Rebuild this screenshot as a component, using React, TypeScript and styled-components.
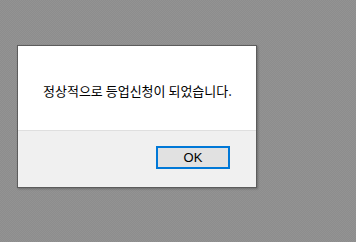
import styled, { createGlobalStyle } from "styled-components";

const GlobalStyle = createGlobalStyle`
  html, body {
    margin: 0;
    padding: 0;
  }
  body {
    font-family: "Noto Sans CJK KR", "Liberation Sans", sans-serif;
  }
`

const Backdrop = styled.div`
  width: 356px;
  height: 242px;
  box-sizing: border-box;
  padding: 45px 0 0 17px;
  background-color: #8f8f8f;
  background-image: repeating-conic-gradient(#8d8d8d 0 25%, #939393 0 50%);
  background-size: 2px 2px;
`

const Dialog = styled.div`
  width: 240px;
  height: 143px;
  box-sizing: border-box;
  border: 1px solid #5c5c5c;
  background: #f0f0f0;
  display: flex;
  flex-direction: column;
  box-shadow: 1px 1px 2px rgba(0, 0, 0, 0.25);
`

const Body = styled.div`
  height: 85px;
  background: #ffffff;
  border-bottom: 1px solid #dfdfdf;
  display: flex;
  align-items: center;
  padding-left: 25px;
  padding-top: 4px;
  box-sizing: border-box;
`

const Message = styled.p`
  margin: 0;
  font-size: 13px;
  color: #000;
  white-space: nowrap;
`

const Footer = styled.div`
  flex: 1;
  display: flex;
  justify-content: flex-end;
  align-items: flex-start;
  padding: 15px 26px 0 0;
`

const OkButton = styled.button`
  width: 74px;
  height: 23px;
  box-sizing: border-box;
  border: 2px solid #0078d7;
  background: #e1e1e1;
  font-family: "Liberation Sans", Arial, sans-serif;
  font-size: 13px;
  color: #000;
  padding: 0;
`

export default function App() {
  return (
    <>
      <GlobalStyle />
      <Backdrop>
        <Dialog>
          <Body>
            <Message>정상적으로 등업신청이 되었습니다.</Message>
          </Body>
          <Footer>
            <OkButton>OK</OkButton>
          </Footer>
        </Dialog>
      </Backdrop>
    </>
  );
}
